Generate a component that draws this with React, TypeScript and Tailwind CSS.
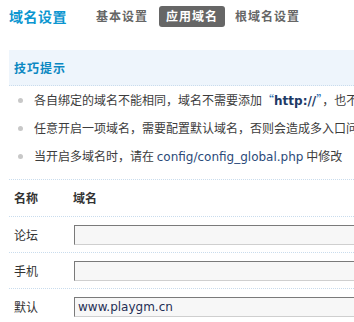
const tips = [
  <>
    各自绑定的域名不能相同，域名不需要添加
    <span className="text-[#2a6cb0]">“</span>
    <b className="font-['DejaVu_Sans'] text-[#1e3a66]">http://</b>
    <span className="text-[#2a6cb0]">”</span>，也不能以“/”结尾
  </>,
  <>任意开启一项域名，需要配置默认域名，否则会造成多入口问题</>,
  <>
    当开启多域名时，请在{" "}
    <span className="font-['DejaVu_Sans'] text-[#2b4a7a]">config/config_global.php</span> 中修改
  </>,
];

const rows = [
  { name: "论坛", value: "" },
  { name: "手机", value: "" },
  { name: "默认", value: "www.playgm.cn" },
];

export default function App() {
  return (
    <div className="w-[354px] h-[322px] overflow-hidden bg-white font-['Noto_Sans_CJK_SC',sans-serif] text-[12px] text-[#3c3c3c]">
      <div className="w-[700px] pl-[9px]">
        {/* 标题与标签 */}
        <div className="flex items-center h-[32px]">
          <h1 className="text-[14px] font-bold text-[#0b96d0] tracking-[0.5px] leading-none">域名设置</h1>
          <span className="ml-[29px] font-bold text-[#666] tracking-[1px]">基本设置</span>
          <span className="ml-[11px] h-[21px] px-[7px] flex items-center rounded-[3px] bg-[#666] font-bold text-white tracking-[1px]">
            应用域名
          </span>
          <span className="ml-[10px] font-bold text-[#666] tracking-[1px]">根域名设置</span>
        </div>

        {/* 技巧提示 */}
        <div className="mt-[18px] h-[36px] flex items-center pl-[5px] bg-[#eef5fc] border-b border-dotted border-[#c9dced]">
          <span className="font-bold text-[#0b88c2] tracking-[1px]">技巧提示</span>
        </div>
        <ul className="pb-[9px] border-b border-dotted border-[#c9dced]">
          {tips.map((t, i) => (
            <li key={i} className="h-[28px] flex items-center whitespace-nowrap">
              <span className="ml-[9px] w-[5px] h-[5px] rounded-full bg-[#c8c8c8]" />
              <span className="ml-[11px]">{t}</span>
            </li>
          ))}
        </ul>

        {/* 域名表 */}
        <div className="h-[37px] flex items-center border-b border-dotted border-[#c9dced] font-bold text-[#333]">
          <span className="w-[64px] pl-[5px]">名称</span>
          <span>域名</span>
        </div>
        {rows.map((r) => (
          <div key={r.name} className="h-[36px] flex items-center border-b border-dotted border-[#c9dced]">
            <span className="w-[65px] pl-[5px] text-[#333]">{r.name}</span>
            <input
              readOnly
              defaultValue={r.value}
              className="w-[420px] h-[20px] pl-[3px] bg-[#f7f7f7] border border-t-[#7a7a7a] border-l-[#7a7a7a] border-r-[#cfcfcf] border-b-[#cfcfcf] font-['DejaVu_Sans'] text-[12px] text-[#1f2f55] outline-none"
            />
          </div>
        ))}
      </div>
    </div>
  );
}
